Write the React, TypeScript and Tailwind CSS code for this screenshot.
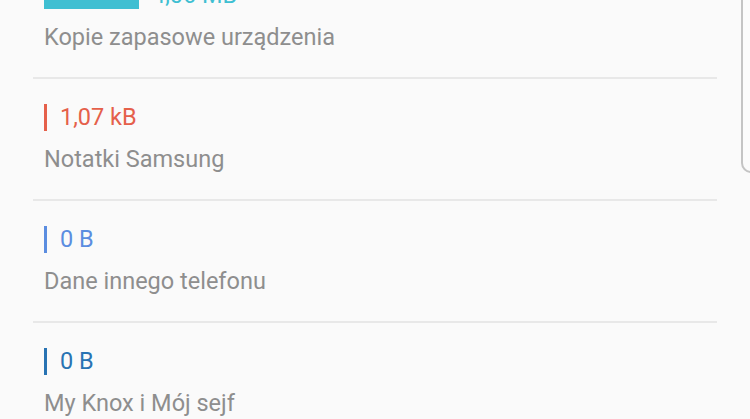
import React from "react";

type StorageItem = {
  size: string;
  label: string;
  color: string;
  barWidth: number;
};

const items: StorageItem[] = [
  { size: "4,06 MB", label: "Kopie zapasowe urządzenia", color: "#3fbfd2", barWidth: 95 },
  { size: "1,07 kB", label: "Notatki Samsung", color: "#e5604a", barWidth: 3 },
  { size: "0 B", label: "Dane innego telefonu", color: "#5b8de0", barWidth: 3 },
  { size: "0 B", label: "My Knox i Mój sejf", color: "#2873b3", barWidth: 3 },
];

function StorageRow({ item, first }: { item: StorageItem; first: boolean }) {
  return (
    <li className={first ? "" : "border-t-2 border-[#e8e8e8]"}>
      <div className="px-[11px] pt-[24px] pb-[26px]">
        <div className="flex h-7 items-center gap-[13px]">
          <span
            className="block h-[27px]"
            style={{ width: item.barWidth, backgroundColor: item.color }}
          />
          <span className="text-[23.5px] leading-7" style={{ color: item.color }}>
            {item.size}
          </span>
        </div>
        <p className="mt-[14px] h-7 text-[23.5px] leading-7 text-[#8e8e8e]">{item.label}</p>
      </div>
    </li>
  );
}

export default function App() {
  return (
    <div
      className="relative h-[419px] w-[750px] overflow-hidden bg-[#fafafa]"
      style={{ fontFamily: "Roboto, 'Noto Sans', sans-serif" }}
    >
      <ul className="mx-[33px] mt-[-43px]">
        {items.map((item, i) => (
          <StorageRow key={i} item={item} first={i === 0} />
        ))}
      </ul>
      <div className="absolute right-[-6px] top-[-10px] h-[183px] w-[15px] rounded-bl-[10px] border-b-2 border-l-2 border-[#c4c4c4] bg-[#fbfbfb]" />
    </div>
  );
}
